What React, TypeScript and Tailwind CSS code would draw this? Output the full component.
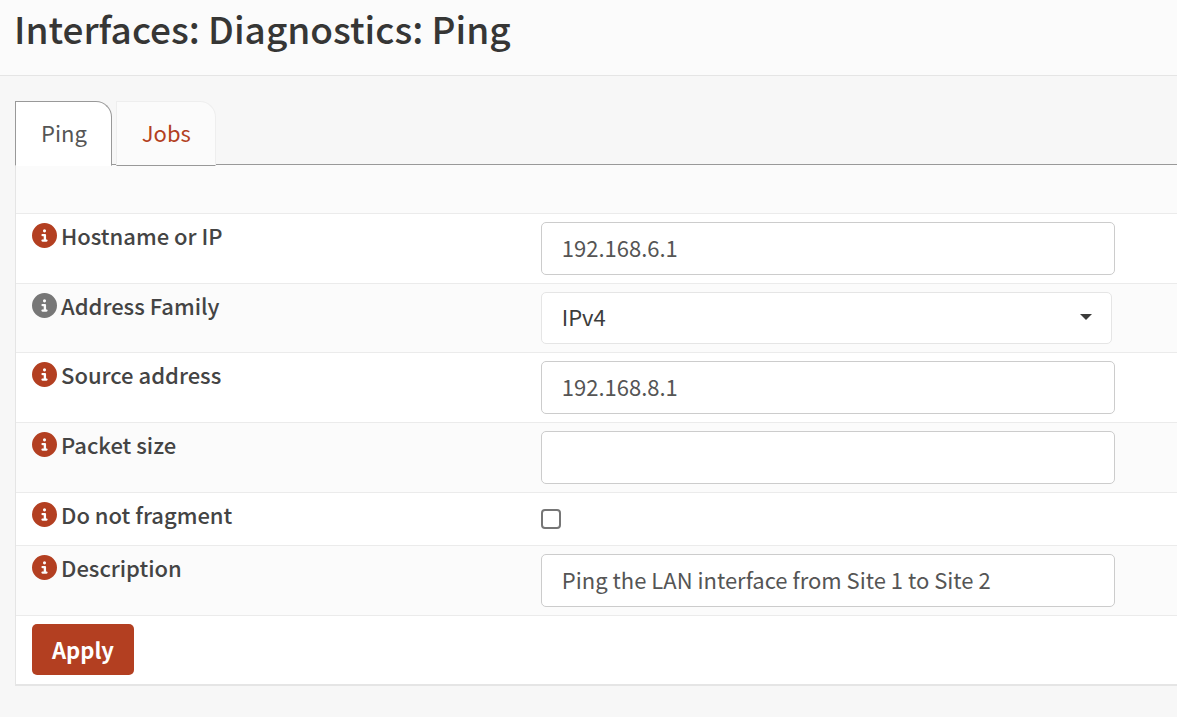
import { useState } from "react";
import type { ReactNode } from "react";
import { FaCircleInfo } from "react-icons/fa6";

const TABS = ["Ping", "Jobs"];

const inputClass =
  "block h-[53px] w-full max-w-[574px] rounded-[5px] border border-[#cccccc] bg-white px-5 pb-1 text-[22px] leading-7 text-[#555555] outline-none focus:border-[#999999]";

type FieldRowProps = {
  id: string;
  label: string;
  muted?: boolean;
  striped?: boolean;
  children: ReactNode;
};

function FieldRow({ id, label, muted, striped, children }: FieldRowProps) {
  return (
    <div
      className={`grid grid-cols-[39fr_50fr] border-t border-[#ebebeb] py-2 ${
        striped ? "bg-[#fbfbfb]" : "bg-white"
      }`}
    >
      <div className="flex items-start gap-1 px-4">
        <button type="button" aria-label={`Help for ${label}`} className="mt-px">
          <FaCircleInfo size={25} className={muted ? "text-[#777777]" : "text-[#b33f21]"} />
        </button>
        <label htmlFor={id} className="text-[22px] leading-[26px] font-medium text-[#444444]">
          {label}
        </label>
      </div>
      <div className="px-4">{children}</div>
    </div>
  );
}

export default function App() {
  const [tab, setTab] = useState("Ping");
  const [hostname, setHostname] = useState("192.168.6.1");
  const [family, setFamily] = useState("IPv4");
  const [source, setSource] = useState("192.168.8.1");
  const [packetSize, setPacketSize] = useState("");
  const [dontFragment, setDontFragment] = useState(false);
  const [description, setDescription] = useState("Ping the LAN interface from Site 1 to Site 2");

  return (
    <div className="min-h-screen bg-[#f7f7f7] font-['Noto_Sans_CJK_SC','Source_Sans_Pro',sans-serif] text-[#3c3c3b]">
      <header className="border-b border-[#e5e5e5] bg-[#fbfbfb] px-3.5 pt-0.5 pb-[21px]">
        <h1 className="text-[37px] leading-[52px] font-medium text-[#363635]">
          Interfaces: Diagnostics: Ping
        </h1>
      </header>

      <main className="pt-[25px] pb-8 pl-[15px]">
        {/* Tabs */}
        <nav className="relative z-10 flex gap-1 border-b border-[#999999]">
          {TABS.map((name) => (
            <a
              key={name}
              href={`#${name.toLowerCase()}`}
              onClick={() => setTab(name)}
              aria-current={tab === name ? "page" : undefined}
              className={`-mb-0.5 rounded-tr-2xl border pt-3.5 pr-6 pb-[17px] pl-[25px] text-[22px] leading-8 ${
                tab === name
                  ? "border-[#999999] border-b-white bg-white text-[#555555]"
                  : "border-[#eeeeee] border-b-[#999999] bg-[#fbfbfb] text-[#b33f21]"
              }`}
            >
              {name}
            </a>
          ))}
        </nav>

        {/* Form */}
        <form
          onSubmit={(e) => e.preventDefault()}
          className="border-b-2 border-l border-[#e5e5e5] bg-white"
        >
          <div className="h-12 bg-[#fbfbfb]" />

          <FieldRow id="hostname" label="Hostname or IP">
            <input
              id="hostname"
              type="text"
              value={hostname}
              onChange={(e) => setHostname(e.target.value)}
              className={inputClass}
            />
          </FieldRow>

          <FieldRow id="family" label="Address Family" muted striped>
            <div className="relative max-w-[571px]">
              <select
                id="family"
                value={family}
                onChange={(e) => setFamily(e.target.value)}
                className="block h-[52px] w-full appearance-none rounded-[5px] border border-[#e5e5e5] bg-white px-5 pb-1 text-[22px] leading-7 text-[#3c3c3b] outline-none"
              >
                <option>IPv4</option>
                <option>IPv6</option>
              </select>
              <svg
                width="12"
                height="6"
                viewBox="0 0 12 6"
                className="pointer-events-none absolute top-[22px] right-5"
                aria-hidden="true"
              >
                <path d="M0 0h12L6 6z" fill="#3c3c3b" />
              </svg>
            </div>
          </FieldRow>

          <FieldRow id="source" label="Source address">
            <input
              id="source"
              type="text"
              value={source}
              onChange={(e) => setSource(e.target.value)}
              className={inputClass}
            />
          </FieldRow>

          <FieldRow id="packet-size" label="Packet size" striped>
            <input
              id="packet-size"
              type="text"
              value={packetSize}
              onChange={(e) => setPacketSize(e.target.value)}
              className={inputClass}
            />
          </FieldRow>

          <FieldRow id="dont-fragment" label="Do not fragment">
            <div className="flex h-9 items-center">
              <input
                id="dont-fragment"
                type="checkbox"
                checked={dontFragment}
                onChange={(e) => setDontFragment(e.target.checked)}
                className="size-5 appearance-none rounded-[4px] border-2 border-[#767676] bg-white checked:bg-[#b33f21]"
              />
            </div>
          </FieldRow>

          <FieldRow id="description" label="Description" striped>
            <input
              id="description"
              type="text"
              value={description}
              onChange={(e) => setDescription(e.target.value)}
              className={inputClass}
            />
          </FieldRow>

          <div className="border-t border-[#ebebeb] px-4 pt-2 pb-[9px]">
            <button
              type="submit"
              className="h-[51px] rounded-[5px] bg-[#b33f21] px-5 pb-0.5 text-[22px] leading-7 font-bold text-white"
            >
              Apply
            </button>
          </div>
        </form>
      </main>
    </div>
  );
}
